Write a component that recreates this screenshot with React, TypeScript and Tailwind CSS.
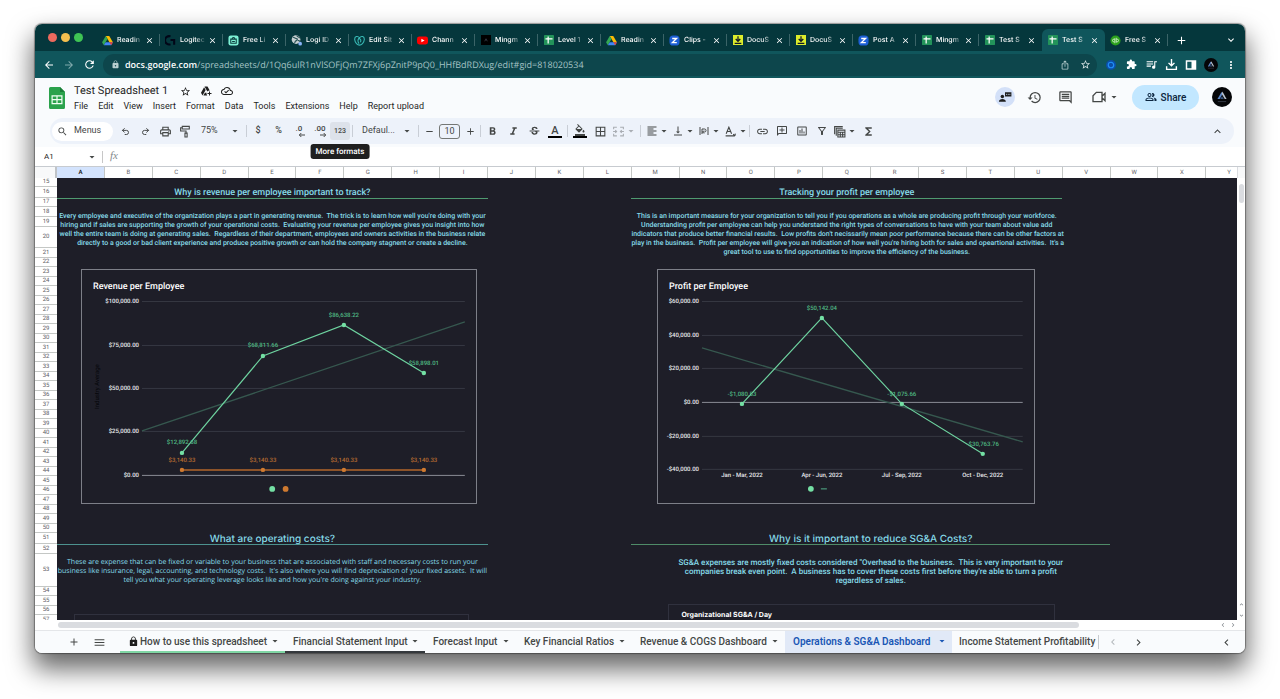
import React from "react";
import {
  MdAdd, MdArrowBack, MdArrowDropDown, MdArrowForward, MdBorderAll, MdChevronLeft, MdChevronRight, MdClose,
  MdExtension, MdFormatAlignLeft, MdFormatBold, MdFormatColorFill, MdFormatItalic, MdFunctions, MdHistory,
  MdInsertChartOutlined, MdInsertLink, MdIosShare, MdKeyboardArrowDown, MdKeyboardArrowUp, MdLock, MdMenu,
  MdMoreVert, MdOutlineAddComment, MdOutlineAddToDrive, MdOutlineCloudDone, MdOutlineComment, MdOutlineFilterAlt,
  MdOutlinePeopleAlt, MdOutlinePrint, MdQueueMusic, MdRefresh, MdRemove, MdSearch, MdStarBorder, MdStrikethroughS,
  MdVerticalAlignBottom,
} from "react-icons/md";
import { Redo2, Undo2 } from "lucide-react";

/* ---------- small drawings ---------- */

const DriveIcon = () => (
  <svg viewBox="0 0 24 22" className="size-[11px]">
    <path d="M8.2 1h7.6l8 13.6h-7.6z" fill="#fbbc05" />
    <path d="M8.2 1 12 7.6 4 21.4.2 14.6z" fill="#34a853" />
    <path d="M4 21.4 8 14.6h15.8L20 21.4z" fill="#4285f4" />
    <path d="M16.2 14.6h7.6L20 21.4z" fill="#ea4335" />
  </svg>
);
const LogitechIcon = () => (
  <svg viewBox="0 0 24 24" className="size-[11px]" fill="none" stroke="#020617" strokeWidth="4.5">
    <path d="M12 3a9 9 0 1 0 0 17" />
    <path d="M12 11h8v10" />
  </svg>
);
const MintIcon = () => (
  <svg viewBox="0 0 24 24" className="size-[11px]">
    <rect x="1" y="1" width="22" height="22" rx="5" fill="#7df0d4" />
    <path d="M6 9h12v9H6zM9 9c0-5 6-5 6 0M9 14h6" fill="none" stroke="#0b3b3d" strokeWidth="2.2" />
  </svg>
);
const GlobeIcon = () => (
  <svg viewBox="0 0 24 24" className="size-[12px]">
    <circle cx="11" cy="11" r="9.5" fill="#c6cfd1" />
    <path d="M4 6c4 0 5 3 8 3s2 4-1 5-2 5-4 5M13 2c-1 3 5 3 7 6M15 13c3 0 4 1 5 3" fill="none" stroke="#2b5558" strokeWidth="2.6" />
    <circle cx="20" cy="20" r="4" fill="#8ab4f8" />
  </svg>
);
const GoDaddyIcon = () => (
  <svg viewBox="0 0 24 24" className="size-[11px]" fill="none" stroke="#38b8b4" strokeWidth="2.4">
    <path d="M12 6C8 1 1 3 1.500 10S8 22 12 22s10-5 10.500-12S16 1 12 6" />
    <path d="M11 19C7 14 8 8 13.500 6M9 7c6 1 7 5 5 9" />
  </svg>
);
const YouTubeIcon = () => (
  <svg viewBox="0 0 24 24" className="size-[11px]">
    <rect y="3.500" width="24" height="17" rx="5" fill="#f00" />
    <path d="m9.500 8 7 4-7 4z" fill="#fff" />
  </svg>
);
const BlackSquareIcon = () => (
  <svg viewBox="0 0 24 24" className="size-[10px]">
    <rect width="24" height="24" fill="#000" />
    <path d="m9 15 3-6 3 6" fill="none" stroke="#4b5563" strokeWidth="1.500" />
  </svg>
);
const SheetsFavicon = () => (
  <svg viewBox="0 0 24 24" className="size-[10px]">
    <rect width="24" height="24" rx="2" fill="#23935a" />
    <path d="M10 3.500v17M3.500 9h17" stroke="#fff" strokeWidth="3" />
  </svg>
);
const ZIcon = () => (
  <svg viewBox="0 0 24 24" className="size-[11px]">
    <rect x="1" y="1" width="22" height="22" rx="8" fill="#1d5fd6" />
    <path d="M7 7.500h9.500L7.500 16.500H17" fill="none" stroke="#fff" strokeWidth="3" />
  </svg>
);
const DownloadBadgeIcon = () => (
  <svg viewBox="0 0 24 24" className="size-[10px]">
    <rect width="24" height="24" fill="#dcec2c" />
    <path d="M12 3v11M6.500 9.500l5.500 5.500 5.500-5.500M4 20h16" fill="none" stroke="#111827" strokeWidth="3" />
  </svg>
);
const QuickBooksIcon = () => (
  <svg viewBox="0 0 24 24" className="size-[11px]">
    <circle cx="12" cy="12" r="11" fill="#2ca01c" />
    <path d="M10.500 7.500V18M9.500 15H8.500a3 3 0 0 1 0-6h2M13.500 16.500V6M14 9h1.500a3 3 0 0 1 0 6h-2" fill="none" stroke="#d9f5d5" strokeWidth="1.800" />
  </svg>
);
const SheetsLogo = () => (
  <svg viewBox="0 0 16 22" className="mt-[2px] h-[22px] w-4 shrink-0" aria-label="Sheets home">
    <path d="M1.500 0H11l5 5v15.500a1.500 1.500 0 0 1-1.500 1.500h-13A1.500 1.500 0 0 1 0 20.500v-19A1.500 1.500 0 0 1 1.500 0z" fill="#2ba24c" />
    <path d="M11 0l5 5h-5z" fill="#1a7e38" />
    <path d="M3.100 8.800h9.800v7.800H3.100zM8 8.800v7.800M3.100 12.700h9.800" fill="none" stroke="#f1fff4" strokeWidth="1.200" />
  </svg>
);
const Avatar = ({ className }: { className: string }) => (
  <svg viewBox="0 0 24 24" className={className}>
    <circle cx="12" cy="12" r="12" fill="#050608" />
    <path d="M6.500 14.500 11.500 6l1.300 2.200-3.600 6.300z" fill="#5b87c9" />
    <path d="m12.500 5.500 5 9h-2.200L11.600 8z" fill="#b9c2cc" />
    <path d="M9.800 14.500 12 11l2.200 3.500z" fill="#33507c" />
    <path d="M7 17.500h10" stroke="#3b4250" strokeWidth="1" />
  </svg>
);
const PaintRollerIcon = () => (
  <svg viewBox="0 0 24 24" className="size-[13px]" fill="none" stroke="currentColor" strokeWidth="2">
    <path d="M6 2.500h13v5H6zM6 5H3v6h10v4" />
    <path d="M11 15h4v7h-4z" />
  </svg>
);
const DecimalIcon = ({ digits, right }: { digits: string; right?: boolean }) => (
  <svg viewBox="0 0 16 16" className="size-4">
    <text x="8" y="8" textAnchor="middle" className="fill-[#444746] font-[Roboto,sans-serif] text-[8px] font-medium">{digits}</text>
    <path d={right ? "M8 12h5.500M11.700 10l2 2-2 2" : "M14 12H8.500M10.300 10l-2 2 2 2"} stroke="#444746" fill="none" />
  </svg>
);
const MergeIcon = () => (
  <svg viewBox="0 0 24 24" className="size-[13px] text-[#a9adb3]" fill="none" stroke="currentColor" strokeWidth="2">
    <path d="M3 8V4h6M15 4h6v4M21 16v4h-6M9 20H3v-4M2 12h6M22 12h-6M6 9.500 8.500 12 6 14.500M18 9.500 15.500 12l2.500 2.500" />
  </svg>
);
const WrapIcon = () => (
  <svg viewBox="0 0 24 24" className="size-[12px]" fill="none" stroke="currentColor" strokeWidth="2">
    <path d="M4 4v16M20 4v16M8 18V8h5a3 3 0 0 1 0 6H9M12 11l-3 3 3 3" />
  </svg>
);
const RotateIcon = () => (
  <svg viewBox="0 0 24 24" className="size-[13px]" fill="none" stroke="currentColor" strokeWidth="2">
    <path d="m4 16 5-12 5 12M6 12h6M3 20h17M20 20l-3-3M20 20l1-4" />
  </svg>
);
const TableViewsIcon = () => (
  <svg viewBox="0 0 24 24" className="size-[13px]" fill="none" stroke="currentColor" strokeWidth="2">
    <path d="M3 17V3h15M6 20V6h12" />
    <path d="M9 9.500h13V22H9zM9 13.500h13M13.500 13.500V22M17.800 13.500V22M9 18h13" />
  </svg>
);
const CameraIcon = () => (
  <svg viewBox="0 0 24 24" className="size-4" fill="none" stroke="currentColor" strokeWidth="2">
    <path d="M8 5h8.500v14H3V10zM16.500 11l4.500-4.500v11L16.500 13" />
  </svg>
);
const PresenterIcon = () => (
  <svg viewBox="0 0 24 24" className="size-[14px]" fill="currentColor">
    <circle cx="7.500" cy="11" r="3" />
    <path d="M1.500 20c0-6 12-6 12 0zM12 4h11v7H12z" />
    <path d="M14 7.500h1.500M16.800 7.500h1.500M19.600 7.500h1.500" stroke="#d3e0f8" strokeWidth="1.600" />
  </svg>
);
const SidePanelIcon = () => (
  <svg viewBox="0 0 24 24" className="size-[12px]">
    <path d="M3 4h18v16H3z" fill="none" stroke="currentColor" strokeWidth="3" />
    <path d="M13 4h8v16h-8z" fill="currentColor" />
  </svg>
);
const DownloadTrayIcon = () => (
  <svg viewBox="0 0 24 24" className="size-[13px]" fill="none" stroke="currentColor" strokeWidth="2.600">
    <path d="M12 2v12M6.500 9l5.500 5.500L17.500 9M3 15v6h18v-6" />
  </svg>
);
const BlueExtIcon = () => (
  <svg viewBox="0 0 24 24" className="size-[12px]">
    <circle cx="12" cy="12" r="10" fill="#0a4fa8" />
    <path d="M17.500 12A5.500 5.500 0 1 1 12 6.500a6 6 0 0 1 5.500 5.500z" fill="none" stroke="#1f8cf5" strokeWidth="2.400" />
  </svg>
);

/* ---------- browser chrome ---------- */

const TABS: { icon: React.ReactNode; title: string }[] = [
  { icon: <DriveIcon />, title: "Readin" },
  { icon: <LogitechIcon />, title: "Logitec" },
  { icon: <MintIcon />, title: "Free Li" },
  { icon: <GlobeIcon />, title: "Logi ID" },
  { icon: <GoDaddyIcon />, title: "Edit Sit" },
  { icon: <YouTubeIcon />, title: "Chann" },
  { icon: <BlackSquareIcon />, title: "Mingm" },
  { icon: <SheetsFavicon />, title: "Level 1" },
  { icon: <DriveIcon />, title: "Readin" },
  { icon: <ZIcon />, title: "Clips -" },
  { icon: <DownloadBadgeIcon />, title: "DocuS" },
  { icon: <DownloadBadgeIcon />, title: "DocuS" },
  { icon: <ZIcon />, title: "Post A" },
  { icon: <SheetsFavicon />, title: "Mingm" },
  { icon: <SheetsFavicon />, title: "Test S" },
  { icon: <SheetsFavicon />, title: "Test S" },
  { icon: <QuickBooksIcon />, title: "Free S" },
];
const ACTIVE_TAB = 15;

function BrowserTabs() {
  return (
    <div className="flex h-[27px] items-end bg-[#05373c] text-white">
      <div className="flex w-[62px] shrink-0 gap-1 self-center pl-[13px]">
        <span className="size-[9px] rounded-full bg-[#ec6a5e]" />
        <span className="size-[9px] rounded-full bg-[#f4bf4f]" />
        <span className="size-[9px] rounded-full bg-[#3fc454]" />
      </div>
      {TABS.map((tab, i) => (
        <div
          key={i}
          className={
            i === ACTIVE_TAB
              ? "flex h-[22px] min-w-0 flex-1 items-center rounded-t-md bg-[#10565c] pl-[5px]"
              : "flex h-[22px] min-w-0 flex-1 items-center pl-[5px]"
          }
        >
          <span className="flex w-[11px] shrink-0 justify-center">{tab.icon}</span>
          <span className="ml-1 min-w-0 flex-1 overflow-hidden [mask-image:linear-gradient(to_right,#000_60%,transparent)] font-[Inter,sans-serif] text-[7px] font-medium whitespace-nowrap">
            {tab.title}
          </span>
          <button aria-label="Close tab" className="flex w-3 shrink-0 justify-center"><MdClose className="size-[9px]" /></button>
          <span
            className={
              i === ACTIVE_TAB || i === ACTIVE_TAB - 1
                ? "ml-1 h-3 w-px shrink-0"
                : "ml-1 h-3 w-px shrink-0 bg-[#3b6468]"
            }
          />
        </div>
      ))}
      <div className="flex h-[22px] w-[77px] shrink-0 items-center justify-between pr-2 pl-[7px]">
        <button aria-label="New tab"><MdAdd className="size-[13px]" /></button>
        <button aria-label="Search tabs"><MdKeyboardArrowDown className="size-3" /></button>
      </div>
    </div>
  );
}

function AddressBar() {
  const cell = "flex w-5 shrink-0 items-center justify-center";
  return (
    <div className="flex h-[27px] items-center bg-[#10565c] px-1 text-white">
      <button aria-label="Back" className={cell}><MdArrowBack className="size-3" /></button>
      <button aria-label="Forward" className="flex w-5 shrink-0 items-center justify-center text-[#7fa9ac]"><MdArrowForward className="size-3" /></button>
      <button aria-label="Reload" className={cell}><MdRefresh className="size-[13px]" /></button>
      <div className="mx-1 flex h-[22px] min-w-0 flex-1 items-center rounded-full bg-[#0d464c] pr-0.5 pl-2">
        <MdLock className="size-[9px] shrink-0 text-[#b9cfd0]" />
        <div role="textbox" aria-label="Address" className="ml-[5px] min-w-0 flex-1 truncate font-['Open_Sans',sans-serif] text-[9px] leading-3 text-[#a4c3c5]">
          <span className="font-semibold text-white">docs.google.com</span>
          /spreadsheets/d/1Qq6ulR1nVlSOFjQm7ZFXj6pZnitP9pQ0_HHfBdRDXug/edit#gid=818020534
        </div>
        <button aria-label="Share page" className={cell}><MdIosShare className="size-[10px] text-[#b9cfd0]" /></button>
        <button aria-label="Bookmark" className={cell}><MdStarBorder className="size-[11px] text-[#d5e3e4]" /></button>
      </div>
      <button aria-label="Recorder" className={cell}><BlueExtIcon /></button>
      <button aria-label="Extensions" className={cell}><MdExtension className="size-[11px]" /></button>
      <button aria-label="Media" className={cell}><MdQueueMusic className="size-[13px]" /></button>
      <button aria-label="Downloads" className={cell}><DownloadTrayIcon /></button>
      <button aria-label="Side panel" className={cell}><SidePanelIcon /></button>
      <button aria-label="Profile" className={cell}><Avatar className="size-[14px]" /></button>
      <button aria-label="Browser menu" className={cell}><MdMoreVert className="size-3" /></button>
    </div>
  );
}

/* ---------- document header ---------- */

const MENUS = ["File", "Edit", "View", "Insert", "Format", "Data", "Tools", "Extensions", "Help", "Report upload"];

function DocHeader() {
  return (
    <header className="flex h-10 items-center bg-[#f9fbfd] pr-[13px] pb-[2px] pl-[14px] text-[#1f1f1f]">
      <SheetsLogo />
      <div className="mt-1 ml-[9px] flex-1">
        <div className="flex h-4 items-center gap-[9px]">
          <h1 className="mr-[3px] text-[11px] leading-4">Test Spreadsheet 1</h1>
          <button aria-label="Star"><MdStarBorder className="size-[11px]" /></button>
          <button aria-label="Add to Drive"><MdOutlineAddToDrive className="size-3" /></button>
          <button aria-label="Saved to Drive"><MdOutlineCloudDone className="size-3" /></button>
        </div>
        <nav className="flex h-4 items-center gap-[10px] text-[9px]">
          {MENUS.map((m) => <button key={m}>{m}</button>)}
        </nav>
      </div>
      <button aria-label="Presence" className="flex size-5 items-center justify-center rounded-full bg-[#d3e0f8]"><PresenterIcon /></button>
      <button aria-label="Version history" className="ml-3 text-[#444746]"><MdHistory className="size-[15px]" /></button>
      <button aria-label="Comments" className="ml-4 text-[#444746]"><MdOutlineComment className="size-[15px]" /></button>
      <button aria-label="Join a call" className="mr-3 ml-[18px] flex items-center gap-px text-[#444746]"><CameraIcon /><MdArrowDropDown className="size-3" /></button>
      <button className="flex h-[25px] w-[67px] items-center justify-center gap-1 rounded-full bg-[#c2e7ff] text-[10px] font-medium text-[#0b2540]">
        <MdOutlinePeopleAlt className="size-3" />Share
      </button>
      <button aria-label="Account" className="ml-[13px]"><Avatar className="size-5" /></button>
    </header>
  );
}

const Sep = ({ className }: { className: string }) => (
  <span className={`h-3 w-px shrink-0 bg-[#c9ced6] ${className}`} />
);
const Tool = ({ label, children }: { label: string; children: React.ReactNode }) => (
  <button aria-label={label} className="flex h-[18px] w-5 shrink-0 items-center justify-center">{children}</button>
);
const DropTool = ({ label, children }: { label: string; children: React.ReactNode }) => (
  <button aria-label={label} className="flex h-[18px] w-[26px] shrink-0 items-center justify-center">
    {children}<MdArrowDropDown className="size-3 shrink-0" />
  </button>
);
const ColorTool = ({ label, children }: { label: string; children: React.ReactNode }) => (
  <button aria-label={label} className="flex h-[18px] w-5 shrink-0 flex-col items-center justify-center">
    {children}<span className="h-0.5 w-[14px] bg-black" />
  </button>
);

function Toolbar() {
  return (
    <div className="bg-[#f9fbfd] pr-[11px] pb-[3px] pl-[15px]">
      <div className="flex h-[26px] items-center rounded-full bg-[#edf2fa] pr-[10px] pl-0.5 text-[9px] text-[#444746]">
        <label className="mr-0.5 flex h-[19px] w-[61px] shrink-0 items-center rounded-full bg-white pl-[5px]">
          <MdSearch className="size-[11px] shrink-0" />
          <input aria-label="Search the menus" placeholder="Menus" className="ml-[6px] w-8 min-w-0 outline-none placeholder:text-[#444746]" />
        </label>
        <Tool label="Undo"><Undo2 className="size-[9px]" strokeWidth={2.6} /></Tool>
        <Tool label="Redo"><Redo2 className="size-[9px]" strokeWidth={2.6} /></Tool>
        <Tool label="Print"><MdOutlinePrint className="size-[13px]" /></Tool>
        <Tool label="Paint format"><PaintRollerIcon /></Tool>
        <div className="relative h-[18px] w-[46px] shrink-0">
          <select aria-label="Zoom" className="h-full w-full appearance-none pl-[6px]"><option>75%</option></select>
          <MdArrowDropDown className="pointer-events-none absolute top-[3px] right-0 size-3" />
        </div>
        <Sep className="mr-px ml-[5px]" />
        <div className="flex w-[102px] shrink-0 justify-between font-medium">
          <Tool label="Currency">$</Tool>
          <Tool label="Percent">%</Tool>
          <Tool label="Decrease decimal places"><DecimalIcon digits=".0" /></Tool>
          <Tool label="Increase decimal places"><DecimalIcon digits=".00" right /></Tool>
          <div className="relative flex">
            <button aria-label="More formats" className="h-[18px] w-5 rounded-[3px] bg-[#dde2ea] text-[7px]">123</button>
            <div role="tooltip" className="absolute top-[22px] left-1/2 z-20 -translate-x-1/2 rounded-[3px] bg-[#1f1f1f] px-[5px] text-[8px] leading-[15px] font-medium whitespace-nowrap text-white">
              More formats
            </div>
          </div>
        </div>
        <Sep className="mr-[3px] ml-0.5" />
        <div className="relative h-[18px] w-[57px] shrink-0">
          <select aria-label="Font" className="h-full w-full appearance-none pl-[6px]"><option>Defaul...</option></select>
          <MdArrowDropDown className="pointer-events-none absolute top-[3px] right-0 size-3" />
        </div>
        <Sep className="mr-0 ml-[5px]" />
        <Tool label="Decrease font size"><MdRemove className="size-[11px]" /></Tool>
        <input aria-label="Font size" defaultValue="10" className="h-[15px] w-[21px] shrink-0 rounded-[3px] border border-[#747775] text-center outline-none" />
        <Tool label="Increase font size"><MdAdd className="size-[11px]" /></Tool>
        <Sep className="mx-0" />
        <div className="flex w-[84px] shrink-0 justify-between pl-px">
          <Tool label="Bold"><MdFormatBold className="size-[13px]" /></Tool>
          <Tool label="Italic"><MdFormatItalic className="size-[13px]" /></Tool>
          <Tool label="Strikethrough"><MdStrikethroughS className="size-[13px]" /></Tool>
          <ColorTool label="Text color"><span className="text-[11px] leading-[11px] font-medium">A</span></ColorTool>
        </div>
        <Sep className="mx-[2px]" />
        <ColorTool label="Fill color"><MdFormatColorFill className="size-[12px]" /></ColorTool>
        <Tool label="Borders"><MdBorderAll className="size-[13px]" /></Tool>
        <button aria-label="Merge cells" className="flex h-[18px] w-[28px] shrink-0 items-center justify-center text-[#a9adb3]">
          <MergeIcon /><MdArrowDropDown className="size-3" />
        </button>
        <Sep className="mr-[4px] ml-0.5" />
        <div className="flex w-[102px] shrink-0 justify-between">
          <DropTool label="Horizontal align"><MdFormatAlignLeft className="size-3" /></DropTool>
          <DropTool label="Vertical align"><MdVerticalAlignBottom className="size-3" /></DropTool>
          <DropTool label="Text wrapping"><WrapIcon /></DropTool>
          <DropTool label="Text rotation"><RotateIcon /></DropTool>
        </div>
        <Sep className="mr-[2px] ml-[2px]" />
        <Tool label="Insert link"><MdInsertLink className="size-[13px]" /></Tool>
        <Tool label="Insert comment"><MdOutlineAddComment className="size-3 -scale-x-100" /></Tool>
        <Tool label="Insert chart"><MdInsertChartOutlined className="size-3" /></Tool>
        <Tool label="Create a filter"><MdOutlineFilterAlt className="size-3" /></Tool>
        <DropTool label="Filter views"><TableViewsIcon /></DropTool>
        <Tool label="Functions"><MdFunctions className="size-[13px]" /></Tool>
        <button aria-label="Hide the menus" className="ml-auto"><MdKeyboardArrowUp className="size-[13px]" /></button>
      </div>
    </div>
  );
}

function FormulaBar() {
  return (
    <div className="flex h-[19px] items-center bg-white text-[#444746]">
      <input aria-label="Name box" defaultValue="A1" className="ml-[9px] w-10 text-[8px] text-[#1f1f1f] outline-none" />
      <button aria-label="Named ranges" className="ml-[2px]"><MdArrowDropDown className="size-3" /></button>
      <span className="ml-1 h-3 w-px bg-[#c7c7c7]" />
      <label htmlFor="fx" className="ml-[7px] font-['Liberation_Serif',serif] text-[11px] text-[#80868b] italic">fx</label>
      <input id="fx" className="ml-2 min-w-0 flex-1 text-[9px] outline-none" />
    </div>
  );
}

/* ---------- grid ---------- */

const COLUMNS = "ABCDEFGHIJKLMNOPQRSTUVWX".split("");
const ROW_HEIGHTS: Record<number, string> = {
  15: "h-[9px]", 16: "h-[11px]", 17: "h-[9px]", 18: "h-[10px]", 19: "h-[10px]", 20: "h-[21px]",
  51: "h-[11px]", 52: "h-[10px]", 53: "h-[33px]",
};
const ROWS = Array.from({ length: 43 }, (_, i) => 15 + i);

const VALUE = "font-[Roboto,sans-serif] text-[6px]";

type ChartPoint = { at: [number, number]; text: string; labelY: number };

function Chart({ title, viewBox, titleX, x1, x2, ticks, trend, points, children }: {
  title: string; viewBox: string; titleX: number; x1: number; x2: number;
  ticks: { y: number; text: string; base?: boolean }[];
  trend: [number, number]; points: ChartPoint[]; children: React.ReactNode;
}) {
  return (
    <svg viewBox={viewBox} className="block h-auto w-full" role="img" aria-label={title}>
      <text x={titleX} y="289" className="fill-white font-[Roboto,sans-serif] text-[9px] font-medium">{title}</text>
      {ticks.map((t) => (
        <g key={t.text}>
          <path d={`M${x1} ${t.y}.5H${x2}`} stroke={t.base ? "#8b8d96" : "#363842"} />
          <text x={x1 - 3} y={t.y + 2} textAnchor="end" className={`fill-[#e8eaed] font-medium ${VALUE}`}>{t.text}</text>
        </g>
      ))}
      <path d={`M${x1} ${trend[0]}L${x2} ${trend[1]}`} stroke="#36584f" strokeWidth="1.300" />
      <path d={"M" + points.map((p) => p.at.join(" ")).join("L")} fill="none" stroke="#6ed3a0" strokeWidth="1.200" />
      {points.map((p) => (
        <g key={p.text}>
          <circle cx={p.at[0]} cy={p.at[1]} r="2.200" fill="#74e0a4" />
          <text x={p.at[0]} y={p.labelY} textAnchor="middle" className={`fill-[#4fb883] font-medium ${VALUE}`}>{p.text}</text>
        </g>
      ))}
      {children}
    </svg>
  );
}

const ORANGE_X = [182, 263, 344, 424];
const QUARTERS: [number, string][] = [
  [742, "Jan - Mar, 2022"], [822, "Apr - Jun, 2022"], [902, "Jul - Sep, 2022"], [983, "Oct - Dec, 2022"],
];

function RevenueChart() {
  return (
    <Chart
      title="Revenue per Employee" viewBox="82 270 394 233" titleX={93} x1={142} x2={465}
      ticks={[
        { y: 301, text: "$100,000.00" }, { y: 345, text: "$75,000.00" }, { y: 388, text: "$50,000.00" },
        { y: 431, text: "$25,000.00" }, { y: 475, text: "$0.00", base: true },
      ]}
      trend={[431, 322]}
      points={[
        { at: [182, 453], text: "$12,892.68", labelY: 444 },
        { at: [263, 356], text: "$68,811.66", labelY: 347 },
        { at: [344, 325], text: "$86,638.22", labelY: 317 },
        { at: [424, 373], text: "$58,898.01", labelY: 365 },
      ]}
    >
      <text transform="translate(99 409) rotate(-90)" className={`fill-[#05060a] ${VALUE}`}>Industry Average</text>
      <path d="M182 470H424" stroke="#b3662a" strokeWidth="1.500" />
      {ORANGE_X.map((x) => (
        <g key={x}>
          <circle cx={x} cy="470" r="2.200" fill="#cf7a30" />
          <text x={x} y="462" textAnchor="middle" className={`fill-[#b56b31] font-medium ${VALUE}`}>$3,140.33</text>
        </g>
      ))}
      <circle cx="272.300" cy="489" r="2.900" fill="#74e0a4" />
      <circle cx="285.700" cy="489" r="2.900" fill="#cf7a30" />
    </Chart>
  );
}

function ProfitChart() {
  return (
    <Chart
      title="Profit per Employee" viewBox="658 270 376 233" titleX={669} x1={702} x2={1023}
      ticks={[
        { y: 301, text: "$60,000.00" }, { y: 335, text: "$40,000.00" }, { y: 368, text: "$20,000.00" },
        { y: 402, text: "$0.00", base: true }, { y: 436, text: "-$20,000.00" }, { y: 469, text: "-$40,000.00" },
      ]}
      trend={[348, 442]}
      points={[
        { at: [742, 404], text: "-$1,080.53", labelY: 396 },
        { at: [822, 318], text: "$50,142.04", labelY: 310 },
        { at: [902, 404], text: "-$1,075.66", labelY: 396 },
        { at: [983, 454], text: "-$30,763.76", labelY: 446 },
      ]}
    >
      {QUARTERS.map(([x, text]) => (
        <text key={text} x={x} y="477" textAnchor="middle" className={`fill-[#e8eaed] font-medium ${VALUE}`}>{text}</text>
      ))}
      <circle cx="811" cy="489" r="2.900" fill="#74e0a4" />
      <path d="M821 489h6" stroke="#41806a" strokeWidth="1.500" />
    </Chart>
  );
}

const Lines = ({ text, className }: { text: string[]; className: string }) => (
  <p className={`text-center leading-[9px] whitespace-pre text-[#86dbe8] ${className}`}>{text.join("\n")}</p>
);

function SheetCanvas() {
  return (
    <div className="flex h-[442px] min-w-0 flex-1 overflow-hidden bg-[#1e1e28] text-[#86dbe8]">
      <section className="min-w-0 flex-[900] pt-[9px]">
        <h2 className="h-3 border-b border-[#4f9a70] text-center text-[9px] leading-[13px] font-medium">Why is revenue per employee important to track?</h2>
        <Lines
          className="h-[70px] pt-[13px] text-[7px] font-medium"
          text={[
            "Every employee and executive of the organization plays a part in generating revenue.  The trick is to learn how well you're doing with your",
            "hiring and if sales are supporting the growth of your operational costs.  Evaluating your revenue per employee gives you insight into how",
            "well the entire team is doing at generating sales.  Regardless of their department, employees and owners activities in the business relate",
            "directly to a good or bad client experience and produce positive growth or can hold the company stagnent or create a decline.",
          ]}
        />
        <div className="mr-[11px] ml-6 border border-[#7d7f88]"><RevenueChart /></div>
        <h2 className="mt-[29px] h-3 border-b border-[#4d928f] text-center font-[Inter,sans-serif] text-[10px] leading-3 font-medium">What are operating costs?</h2>
        <Lines
          className="h-[69px] pt-[13px] font-['Open_Sans',sans-serif] text-[7px] font-medium"
          text={[
            "These are expense that can be fixed or variable to your business that are associated with staff and necessary costs to run your",
            "business like insurance, legal, accounting, and technology costs.  It's also where you will find depreciation of your fixed assets.  It will",
            "tell you what your operating leverage looks like and how you're doing against your industry.",
          ]}
        />
        <div className="mr-[19px] ml-[17px] h-20 border border-[#30313e]" />
      </section>
      <div className="flex-[300]" />
      <section className="min-w-0 flex-[1000] pt-[9px]">
        <h2 className="mr-12 h-3 border-b border-[#4f9a70] text-center text-[9px] leading-[13px] font-medium">Tracking your profit per employee</h2>
        <Lines
          className="mr-12 h-[70px] pt-[13px] text-[7px] font-medium"
          text={[
            "This is an important measure for your organization to tell you if you operations as a whole are producing profit through your workforce.",
            "Understanding profit per employee can help you understand the right types of conversations to have with your team about value add",
            "indicators that produce better financial results.  Low profits don't necissarily mean poor performance because there can be other factors at",
            "play in the business.  Profit per employee will give you an indication of how well you're hiring both for sales and opeartional activities.  It's a",
            "great tool to use to find opportunities to improve the efficiency of the business.",
          ]}
        />
        <div className="mr-[75px] ml-[26px] border border-[#7d7f88]"><ProfitChart /></div>
        <h2 className="mt-[29px] h-3 border-b border-[#4f8b68] text-center font-[Inter,sans-serif] text-[10px] leading-3 font-medium">Why is it important to reduce SG&amp;A Costs?</h2>
        <Lines
          className="h-[59px] pt-[13px] text-[8px] font-medium"
          text={[
            "SG&A expenses are mostly fixed costs considered \"Overhead to the business.  This is very important to your",
            "companies break even point.  A business has to cover these costs first before they're able to turn a profit",
            "regardless of sales.",
          ]}
        />
        <div className="mr-[55px] ml-[37px] h-20 border border-[#30313e] pt-1 pl-3">
          <h3 className="font-[Inter,sans-serif] text-[7px] leading-[11px] font-bold text-white">Organizational SG&amp;A / Day</h3>
        </div>
      </section>
      <div className="flex-[265]" />
    </div>
  );
}

function Grid() {
  return (
    <>
      <div className="flex h-3 border-t border-[#c7cbd0] bg-white text-[6px] leading-[11px] text-[#5f6368]">
        <div className="w-[22px] shrink-0 border-r-2 border-[#c0c4c8] bg-[#f8f9fa]" />
        {COLUMNS.map((c) => (
          <div
            key={c}
            className={c === "A"
              ? "min-w-0 flex-[100] border-r border-[#c4c7c5] bg-[#d3e3fd] text-center font-bold text-[#1f1f1f]"
              : "min-w-0 flex-[100] border-r border-[#c4c7c5] text-center"}
          >
            {c}
          </div>
        ))}
        <div className="min-w-0 flex-[65] text-right"><span className="mr-[6px]">Y</span></div>
        <div className="w-2 shrink-0 border-l border-[#dadce0] bg-[#f8f9fa]" />
      </div>
      <div className="flex">
        <div className="flex h-[442px] w-[22px] shrink-0 flex-col overflow-hidden bg-white text-[6px] text-[#5f6368]">
          {ROWS.map((r) => (
            <div
              key={r}
              className={`flex shrink-0 items-center justify-center border-b border-[#c4c7c5] leading-none ${ROW_HEIGHTS[r] ?? (r % 2 ? "h-[10px]" : "h-[9px]")}`}
            >
              {r}
            </div>
          ))}
        </div>
        <SheetCanvas />
        <div className="flex w-2 shrink-0 flex-col items-center bg-white text-[#80868b]">
          <span className="mt-[6px] h-[19px] w-[5px] rounded-full bg-[#dadce0]" />
          <MdKeyboardArrowUp className="mt-auto size-[7px]" />
          <MdKeyboardArrowDown className="mt-1 mb-px size-[7px]" />
        </div>
      </div>
      <div className="flex h-[10px] items-center bg-white pr-2 pl-[23px] text-[#80868b]">
        <div className="min-w-0 flex-1 pr-[140px]"><div className="h-[6px] rounded-full bg-[#dadce0]" /></div>
        <MdChevronLeft className="size-[8px]" />
        <MdChevronRight className="ml-0.5 size-[8px]" />
      </div>
    </>
  );
}

/* ---------- sheet tabs ---------- */

const SHEETS: { name: string; width: string; locked?: boolean; active?: boolean }[] = [
  { name: "How to use this spreadsheet", width: "w-[165px] border-[#7fd6a4]", locked: true },
  { name: "Financial Statement Input", width: "w-[140px] border-[#34383c]" },
  { name: "Forecast Input", width: "w-[91px] border-transparent" },
  { name: "Key Financial Ratios", width: "w-[116px] border-transparent" },
  { name: "Revenue & COGS Dashboard", width: "w-[153px] border-transparent" },
  { name: "Operations & SG&A Dashboard", width: "w-[167px] border-transparent", active: true },
];

function SheetTabs() {
  return (
    <div className="flex h-[23px] items-center border-t border-[#e4e6e9] bg-[#f9fbfd] text-[10px] font-medium text-[#444746]">
      <button aria-label="Add sheet" className="ml-[33px]"><MdAdd className="size-3" /></button>
      <button aria-label="All sheets" className="mr-[14px] ml-[13px]"><MdMenu className="size-[13px]" /></button>
      <div className="flex h-full min-w-0 items-stretch">
        {SHEETS.map((s) => (
          <button
            key={s.name}
            className={`flex shrink-0 items-center justify-between border-b-2 pr-1 pl-2 whitespace-nowrap ${s.width} ${s.active ? "bg-[#e1e9f7] text-[#1a57b5]" : ""}`}
          >
            <span className="flex items-center">
              {s.locked && <MdLock className="mr-px size-[11px] text-[#1f1f1f]" />}
              <span className={s.active ? "font-semibold" : ""}>{s.name}</span>
            </span>
            <MdArrowDropDown className="size-3 shrink-0" />
          </button>
        ))}
        <button className="border-b-2 border-transparent pr-[3px] pl-[7px] whitespace-nowrap">Income Statement Profitability</button>
      </div>
      <span className="h-[14px] w-px shrink-0 bg-[#c7cbd0]" />
      <button aria-label="Scroll tabs left" className="ml-2 text-[#b4b8bc]"><MdChevronLeft className="size-3" /></button>
      <button aria-label="Scroll tabs right" className="ml-[13px]"><MdChevronRight className="size-[13px]" /></button>
      <button aria-label="Show side panel" className="mr-3 ml-auto"><MdChevronLeft className="size-[13px]" /></button>
    </div>
  );
}

export default function App() {
  return (
    <div className="bg-white px-[35px] pt-6 pb-[46px] font-[Roboto,sans-serif] [text-rendering:geometricPrecision]">
      <div className="rounded-[7px] shadow-[0_0_1px_1px_rgba(0,0,0,0.35),0_14px_26px_2px_rgba(0,0,0,0.6)]">
        <div className="overflow-hidden rounded-[7px]">
          <BrowserTabs />
          <AddressBar />
          <DocHeader />
          <Toolbar />
          <FormulaBar />
          <Grid />
          <SheetTabs />
        </div>
      </div>
    </div>
  );
}
